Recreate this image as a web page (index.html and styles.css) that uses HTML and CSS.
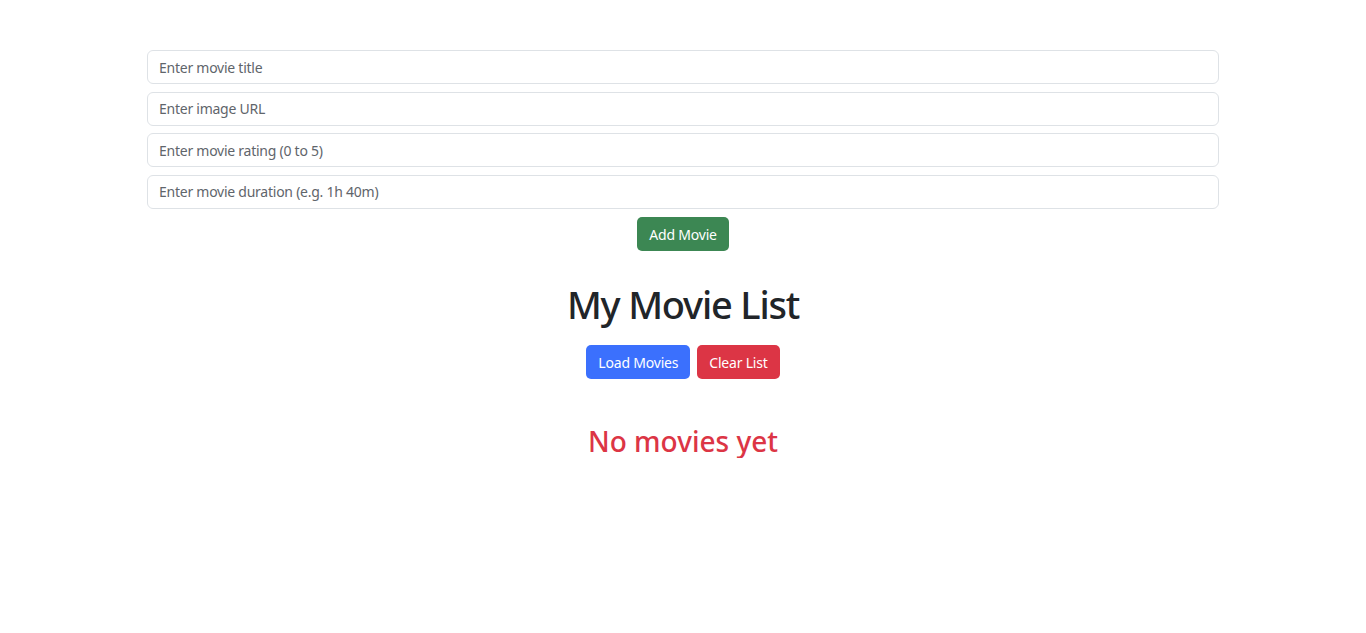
FILE: index.html
```html
<!DOCTYPE html>
<html lang="en">
<head>
<meta charset="utf-8">
<title>My Movie List</title>
<link rel="stylesheet" href="styles.css">
</head>
<body>
<div class="container">
  <form class="movie-form">
    <input class="field" type="text" placeholder="Enter movie title">
    <input class="field" type="text" placeholder="Enter image URL">
    <input class="field" type="text" placeholder="Enter movie rating (0 to 5)">
    <input class="field" type="text" placeholder="Enter movie duration (e.g. 1h 40m)">
    <div class="form-actions">
      <button type="button" class="btn btn-success">Add Movie</button>
    </div>
  </form>
  <h1 class="title">My Movie List</h1>
  <div class="list-actions">
    <button type="button" class="btn btn-primary">Load Movies</button>
    <button type="button" class="btn btn-danger">Clear List</button>
  </div>
  <h3 class="empty">No movies yet</h3>
</div>
</body>
</html>
```
FILE: styles.css
```css
* { box-sizing: border-box; }
body {
  margin: 0;
  background: #fff;
  color: #212529;
  font-family: "Noto Sans", "Open Sans", sans-serif;
}
.container {
  width: 1072px;
  margin: 50px auto 0;
}
.movie-form {
  display: flex;
  flex-direction: column;
  gap: 7.5px;
}
.field {
  display: block;
  width: 100%;
  height: 34px;
  padding: 0 11px;
  border: 1px solid #dee2e6;
  border-radius: 6px;
  font-family: inherit;
  font-size: 14px;
  letter-spacing: -0.25px;
  color: #212529;
  background: #fff;
}
.field::placeholder { color: #5f656b; }
.form-actions {
  display: flex;
  justify-content: center;
  padding-top: 1px;
}
.btn {
  height: 34px;
  padding: 0 12px;
  border: 0;
  border-radius: 5px;
  font-family: inherit;
  font-size: 14px;
  letter-spacing: -0.2px;
  color: #fff;
  cursor: pointer;
}
.btn-success { background: #3c8753; }
.btn-primary { background: #3b70fd; }
.btn-danger { background: #dc3545; }
.title {
  margin: 29px 0 17px;
  text-align: center;
  font-size: 38px;
  font-weight: 500;
  letter-spacing: -1.2px;
  line-height: 48px;
  color: #212529;
}
.list-actions {
  display: flex;
  justify-content: center;
  gap: 7px;
}
.empty {
  margin: 45px 0 0;
  text-align: center;
  font-size: 28px;
  font-weight: 500;
  line-height: 34px;
  color: #dc3545;
}
```
